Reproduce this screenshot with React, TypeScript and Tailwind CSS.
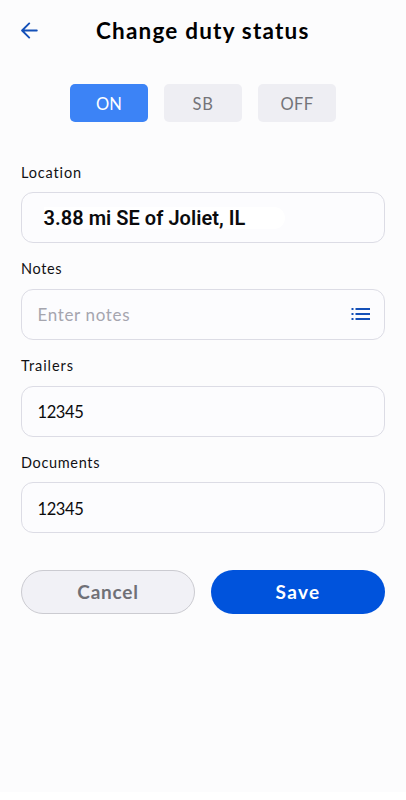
import type { ReactNode } from "react";

function Field({ label, labelClass, children }: { label: string; labelClass: string; children: ReactNode }) {
  return (
    <div className="mb-[14.75px]">
      <div className={`mb-[8px] h-[23px] text-[14.5px] text-[#111114] ${labelClass}`}>{label}</div>
      <div className="flex h-[51px] items-center rounded-[12px] border border-[#dcdce5] bg-[#fcfcfe] px-[15.5px]">
        {children}
      </div>
    </div>
  );
}

export default function App() {
  return (
    <div className="h-[800px] w-[406px] bg-white">
      <main className="h-[792px] bg-[#fcfcfd] px-[21px] pt-[14px] font-['Lato',sans-serif] text-[#0b0b0d]">
        <header className="flex h-[34px] items-center">
          <button aria-label="Back" className="w-[60px]">
            <svg className="-mt-[2px]" width="17" height="17" viewBox="0 0 17 17" fill="none" stroke="#1450b8" strokeWidth="1.9" strokeLinecap="round" strokeLinejoin="round">
              <path d="M15.8 8.5H1.2M8.2 1.4L1.1 8.5l7.1 7.1" />
            </svg>
          </button>
          <h1 className="ml-[15px] whitespace-nowrap text-[22.5px] font-bold leading-[34px] tracking-[1.2px] text-black">Change duty status</h1>
        </header>

        <div className="mt-[36px] flex justify-center gap-4">
          <button className="h-[38px] w-[78px] rounded-[5px] bg-[#3c83f6] pt-[2px] text-[16.5px] tracking-[0.2px] text-white">ON</button>
          <button className="h-[38px] w-[78px] rounded-[5px] bg-[#eeeef3] pt-[2px] text-[16.5px] tracking-[0.6px] text-[#747479]">SB</button>
          <button className="h-[38px] w-[78px] rounded-[5px] bg-[#eeeef3] pt-[2px] text-[16.5px] tracking-[0.3px] text-[#747479]">OFF</button>
        </div>

        <form className="mt-[39px]">
          <Field label="Location" labelClass="leading-[23px] tracking-[0.85px]">
            <span className="ml-[6px] whitespace-nowrap rounded-r-full bg-white pr-10 font-['Roboto',sans-serif] text-[20px] font-semibold leading-[22px] tracking-[0.04px]">3.88 mi SE of Joliet, IL</span>
          </Field>
          <Field label="Notes" labelClass="leading-[21px] tracking-[0.6px]">
            <span className="flex-1 text-[17px] tracking-[0.65px] text-[#a5a5ae]">Enter notes</span>
            <svg className="-mr-[2px]" width="20" height="12" viewBox="0 0 20 12" fill="#1450b8">
              <path d="M0.5 0h2v2h-2zM0.5 5h2v2h-2zM0.5 10h2v2h-2zM4.5 0h14.5v2H4.5zM4.5 5h14.5v2H4.5zM4.5 10h14.5v2H4.5z" />
            </svg>
          </Field>
          <Field label="Trailers" labelClass="leading-[21px] tracking-[0.95px]">
            <span className="pt-[2px] text-[16.5px] tracking-[-0.4px]">12345</span>
          </Field>
          <Field label="Documents" labelClass="leading-[23px] tracking-[0.65px]">
            <span className="pt-[3px] text-[16.5px] tracking-[-0.4px]">12345</span>
          </Field>
        </form>

        <footer className="mt-[37px] flex gap-4">
          <button className="h-[44px] w-[174px] rounded-full border border-[#cbcbd1] bg-[#f1f1f6] text-[19px] font-bold tracking-[0.75px] text-[#707076]">Cancel</button>
          <button className="h-[44px] w-[174px] rounded-full bg-[#0053dc] text-[19px] font-bold tracking-[1.3px] text-white">Save</button>
        </footer>
      </main>
    </div>
  );
}
